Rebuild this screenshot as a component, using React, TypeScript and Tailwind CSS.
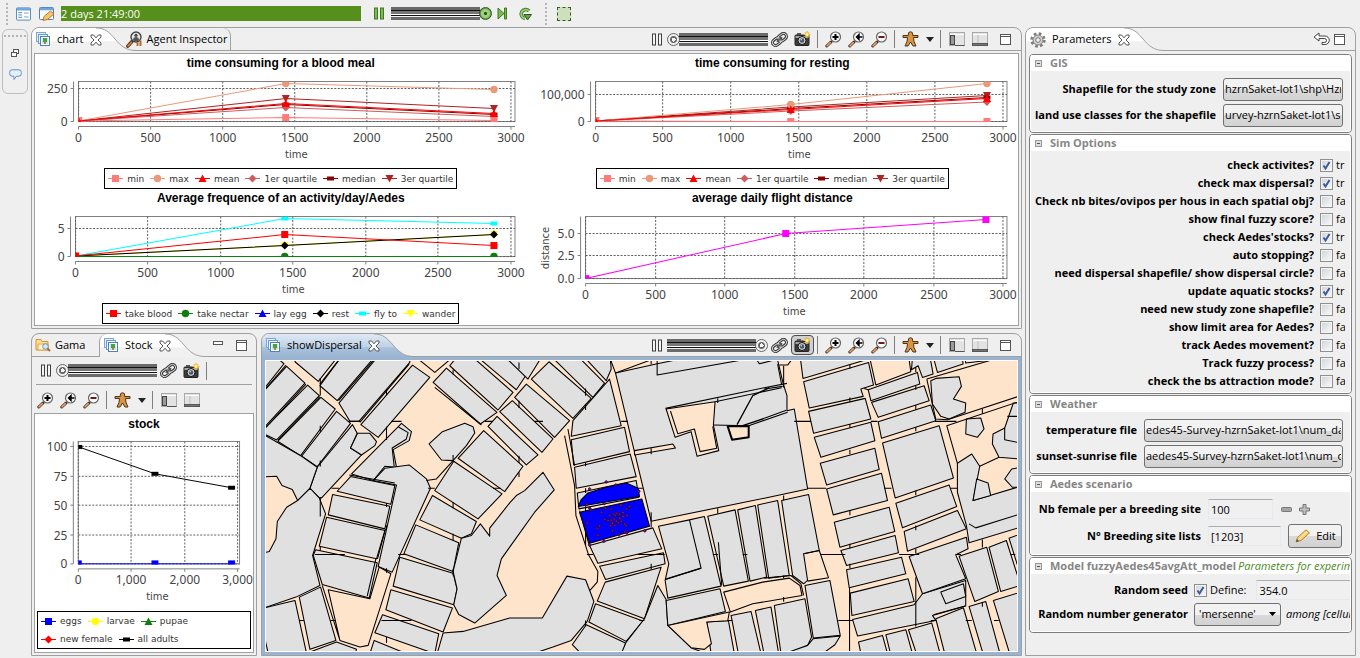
import React, { ReactNode } from "react";

type Shape = "square" | "circle" | "up" | "diamond" | "bar" | "down";

const UI = "font-['Open_Sans','Noto_Sans',sans-serif]";

/* ---------------------------------------------------------------- icons */

function StackIcon() {
  return (
    <svg width="15" height="15" viewBox="0 0 15 15" fill="none" className="shrink-0" aria-hidden="true">
      <rect x="0.500" y="0.500" width="9" height="9" fill="#e6f0fa" stroke="#7ba7d4" />
      <rect x="2.500" y="2.500" width="9" height="9" fill="#f0f6fc" stroke="#6c9bcb" />
      <rect x="4.500" y="4.500" width="9" height="9" fill="#fff" stroke="#4b83bd" />
      <rect x="6" y="6" width="6" height="6" fill="#cde3f5" />
      <rect x="7" y="6" width="4" height="4" fill="#4fa03c" />
      <rect x="8" y="10" width="2" height="2" fill="#c77c33" />
    </svg>
  );
}

function CloseIcon() {
  return (
    <svg width="12" height="12" viewBox="0 0 12 12" aria-hidden="true">
      <path d="M1 1h2.600L6 3.800 8.400 1H11v2L8 6l3 3v2H8.400L6 8.200 3.600 11H1V9l3-3-3-3z" fill="#fff" stroke="#555" />
    </svg>
  );
}

function MagnifyPersonIcon() {
  return (
    <svg width="17" height="17" viewBox="0 0 17 17" fill="none" aria-hidden="true">
      <path d="M1.800 15.200 6 10.500" stroke="#5a351a" strokeWidth="3.400" strokeLinecap="round" />
      <path d="M2 15 5.500 11.200" stroke="#d98a3a" strokeWidth="1.500" strokeLinecap="round" />
      <circle cx="10" cy="6" r="5" fill="#e4e4e4" stroke="#444" strokeWidth="1.400" />
      <circle cx="10" cy="4.300" r="1.600" fill="#444" />
      <path d="M7 9c0-2 1.500-3 3-3s3 1 3 3l-1.500 1.200h-3z" fill="#555" />
      <path d="M11.500 11v4M14.500 9.500V15" stroke="#b26b2c" strokeWidth="2" />
    </svg>
  );
}

function FolderIcon() {
  return (
    <svg width="16" height="14" viewBox="0 0 16 14" fill="none" aria-hidden="true">
      <path d="M1 12V1.500h5l1 2h6V12z" fill="#fbdf9b" stroke="#d8952f" />
      <path d="M3 12V6h10v6z" fill="#fff3cf" stroke="#e0a546" />
      <circle cx="10.500" cy="8.500" r="2.800" fill="#d5e6f7" stroke="#6e94bd" />
      <path d="m12.500 10.500 2.500 2.500" stroke="#b0672a" strokeWidth="2" />
    </svg>
  );
}

function GearIcon() {
  return (
    <svg width="16" height="16" viewBox="0 0 16 16" fill="none" className="shrink-0" aria-hidden="true">
      <circle cx="8" cy="8" r="6.300" stroke="#7c7c7c" strokeWidth="2.800" strokeDasharray="2.600 2.348" />
      <circle cx="8" cy="8" r="5" fill="#cfcfcf" stroke="#858585" />
      <circle cx="8" cy="8" r="2.300" fill="#f4f4f4" stroke="#777" />
    </svg>
  );
}

function PauseIcon({ green = false }: { green?: boolean }) {
  const f = green ? "#7cb950" : "#f4f4f4";
  const s = green ? "#3f7a22" : "#3f3f3f";
  return (
    <svg width="12" height="13" viewBox="0 0 12 13" aria-hidden="true">
      <rect x="1.500" y="1" width="3" height="11" fill={f} stroke={s} />
      <rect x="7.500" y="1" width="3" height="11" fill={f} stroke={s} />
    </svg>
  );
}

function LinkIcon() {
  return (
    <svg width="17" height="15" viewBox="0 0 17 15" fill="none" aria-hidden="true">
      <g transform="rotate(-38 8.500 7.500)">
        <rect x="0.500" y="4.500" width="9" height="6" rx="3" stroke="#333" strokeWidth="3" />
        <rect x="7.500" y="4.500" width="9" height="6" rx="3" stroke="#333" strokeWidth="3" />
        <rect x="0.500" y="4.500" width="9" height="6" rx="3" stroke="#d4d4d4" />
        <rect x="7.500" y="4.500" width="9" height="6" rx="3" stroke="#d4d4d4" />
        <path d="M5 7.500h7" stroke="#555" strokeWidth="1.500" />
      </g>
    </svg>
  );
}

function CameraIcon() {
  return (
    <svg width="17" height="16" viewBox="0 0 17 16" fill="none" aria-hidden="true">
      <rect x="1" y="4" width="14" height="10.500" rx="1" fill="#3c3c3c" stroke="#222" />
      <rect x="3" y="2" width="4" height="2" fill="#555" />
      <rect x="1.500" y="5" width="13" height="2" fill="#a5a5a5" />
      <circle cx="8" cy="9.500" r="4" fill="#d5d5d5" stroke="#111" />
      <circle cx="8" cy="9.500" r="2.300" fill="#46566a" />
      <circle cx="7.300" cy="8.800" r="0.800" fill="#cfe0f3" />
      <path d="M13 0v7M9.500 3.500h7M10.800 1.300l4.400 4.400M15.200 1.300l-4.400 4.400" stroke="#f0b429" strokeWidth="1.200" />
      <circle cx="13" cy="3.500" r="1.500" fill="#fff3a8" />
    </svg>
  );
}

function ZoomIcon({ kind }: { kind: "in" | "fit" | "out" }) {
  return (
    <svg width="17" height="17" viewBox="0 0 17 17" fill="none" aria-hidden="true">
      <path d="M1.800 15 6 11" stroke="#4a3020" strokeWidth="3" strokeLinecap="round" />
      <path d="M2 14.800 5.300 11.700" stroke="#e0a070" strokeWidth="1.600" strokeLinecap="round" />
      <circle cx="10.500" cy="6" r="5" fill="#fafafa" stroke="#666" strokeWidth="1.200" />
      {kind === "in" && <path d="M7.500 6h6M10.500 3v6" stroke="#000" strokeWidth="2" />}
      {kind === "out" && <path d="M7.500 6h6" stroke="#6e1a1a" strokeWidth="2" />}
      {kind === "fit" && <path d="M10 6h4.500M11 3.500 8.500 6 11 8.500z" fill="#000" stroke="#000" strokeWidth="1.400" />}
    </svg>
  );
}

function PersonIcon() {
  return (
    <svg width="17" height="16" viewBox="0 0 17 16" aria-hidden="true">
      <path d="M1 4.500h5.300V3a2.200 2.200 0 0 1 4.400 0v1.500H16v2h-4.500l.5 4 2 4.500h-3l-2.500-4L6 15H3l2-4.500.5-4H1z" fill="#dd9440" stroke="#4a3520" />
    </svg>
  );
}

function LayoutIcon({ side }: { side: "left" | "bottom" }) {
  return (
    <svg width="16" height="14" viewBox="0 0 16 14" aria-hidden="true">
      <rect x="0.500" y="0.500" width="15" height="13" fill="#e3e3e3" stroke="#a9a9a9" />
      <path d="M1 2.500h14" stroke="#fff" />
      {side === "left" ? (
        <>
          <rect x="1.500" y="3.500" width="4" height="9" fill="#9a9a9a" stroke="#444" />
          <path d="M6 13.500h9.500" stroke="#555" />
        </>
      ) : (
        <>
          <path d="M6 3v8" stroke="#bbb" />
          <rect x="0.500" y="11.500" width="15" height="2" fill="#777" stroke="#555" />
        </>
      )}
    </svg>
  );
}

function MaxIcon() {
  return (
    <svg width="11" height="11" viewBox="0 0 11 11" aria-hidden="true">
      <rect x="0.500" y="0.500" width="10" height="10" fill="#fff" stroke="#555" />
      <path d="M1 2.500h9" stroke="#555" />
    </svg>
  );
}

function MinIcon() {
  return (
    <svg width="11" height="11" viewBox="0 0 11 11" aria-hidden="true">
      <rect x="0.500" y="1.500" width="9" height="3" fill="#fff" stroke="#555" />
    </svg>
  );
}

/* ------------------------------------------------------------- controls */

function IconButton({ label, children, pressed, narrow }: { label: string; children: ReactNode; pressed?: boolean; narrow?: boolean }) {
  return (
    <button
      type="button"
      aria-label={label}
      className={
        "flex h-5 shrink-0 items-center justify-center " +
        (narrow ? "w-[15px]" : "w-[23px]") +
        (pressed ? " rounded-sm border border-[#4d4d4d] bg-[#d0d0d0]" : "")
      }
    >
      {children}
    </button>
  );
}

function Separator() {
  return <span className="mr-1 ml-[3px] h-[18px] w-px shrink-0 bg-[#808080]" />;
}

function SpeedSlider({ value, green }: { value: number; green?: boolean }) {
  return (
    <input
      type="range"
      aria-label="Speed"
      min={0}
      max={100}
      defaultValue={value}
      className={
        "h-[13px] w-[101px] shrink-0 appearance-none bg-[linear-gradient(#6b6b6b_0_3px,#111_3px_4px,#777_4px_7px,#fff_7px_8px,#111_8px_9px,#f2f2f2_9px_10px,#6b6b6b_10px_13px)] bg-[length:89px_13px] bg-no-repeat [&::-webkit-slider-thumb]:h-[13px] [&::-webkit-slider-thumb]:w-[13px] [&::-webkit-slider-thumb]:appearance-none [&::-webkit-slider-thumb]:rounded-full [&::-webkit-slider-thumb]:border " +
        (value > 50 ? "bg-left " : "bg-right ") +
        (green
          ? "[&::-webkit-slider-thumb]:border-[#31591f] [&::-webkit-slider-thumb]:bg-[radial-gradient(circle,#234a17_0_1px,#9fd07c_2px_4px,#6a9e58_5px)]"
          : "[&::-webkit-slider-thumb]:border-[#666] [&::-webkit-slider-thumb]:bg-[radial-gradient(circle,#f4f4f4_0_2px,#666_2px_3px,#f0f0f0_4px)]")
      }
    />
  );
}

function RunTools({ value, pressed }: { value: number; pressed?: boolean }) {
  return (
    <>
      <button type="button" aria-label="Pause" className="flex h-5 w-5 shrink-0 items-center justify-center">
        <PauseIcon />
      </button>
      <SpeedSlider value={value} />
      <IconButton label="Synchronize"><LinkIcon /></IconButton>
      <IconButton label="Snapshot" pressed={pressed}><CameraIcon /></IconButton>
      <Separator />
    </>
  );
}

function ViewTools() {
  return (
    <>
      <IconButton label="Zoom in"><ZoomIcon kind="in" /></IconButton>
      <IconButton label="Zoom to fit"><ZoomIcon kind="fit" /></IconButton>
      <IconButton label="Zoom out"><ZoomIcon kind="out" /></IconButton>
      <Separator />
      <IconButton label="Focus on agent"><PersonIcon /></IconButton>
      <IconButton label="Focus menu" narrow>
        <svg width="8" height="5" viewBox="0 0 8 5" aria-hidden="true"><path d="M0 0h8L4 5z" fill="#222" /></svg>
      </IconButton>
      <Separator />
      <IconButton label="Side panel"><LayoutIcon side="left" /></IconButton>
      <IconButton label="Overlay"><LayoutIcon side="bottom" /></IconButton>
    </>
  );
}

function TabCurve({ blue }: { blue?: boolean }) {
  const id = blue ? "curve-blue" : "curve-white";
  return (
    <svg width="40" height="23" viewBox="0 0 40 23" className="shrink-0" aria-hidden="true">
      <defs>
        <linearGradient id={id} x1="0" y1="0" x2="0" y2="1">
          <stop offset="0" stopColor={blue ? "#dfe9f4" : "#ffffff"} />
          <stop offset="0.55" stopColor={blue ? "#c0d2e6" : "#ffffff"} />
          <stop offset="0.6" stopColor={blue ? "#a9c1dc" : "#f1f1f1"} />
          <stop offset="1" stopColor={blue ? "#99b4d1" : "#f1f1f1"} />
        </linearGradient>
      </defs>
      <path d="M0 0C9 0 13 4 19 11S30 22.500 40 22.500V23H0z" fill={`url(#${id})`} />
      <path d="M0 0C9 0 13 4 19 11S30 22.500 40 22.500" fill="none" stroke="#a0a0a0" />
    </svg>
  );
}

function ActiveTab({ icon, label, blue, leftEdge }: { icon: ReactNode; label: string; blue?: boolean; leftEdge?: boolean }) {
  return (
    <div className="-mb-px flex h-[23px] shrink-0">
      <div
        className={
          "flex items-center gap-[6px] rounded-tl-lg pl-1 " +
          (leftEdge ? "border-l border-[#a0a0a0] " : "") +
          (blue
            ? "bg-[linear-gradient(#dfe9f4_0%,#c0d2e6_55%,#a9c1dc_60%,#99b4d1_100%)]"
            : "bg-[linear-gradient(#fff_0%,#fff_55%,#f1f1f1_60%,#f1f1f1_100%)]")
        }
      >
        {icon}
        <span>{label}</span>
        <button type="button" aria-label={"Close " + label} className="relative z-10"><CloseIcon /></button>
      </div>
      <div className="-ml-[6px]"><TabCurve blue={blue} /></div>
    </div>
  );
}

/* --------------------------------------------------------------- charts */

interface Series {
  name: string;
  color: string;
  shape: Shape;
  points: [number, number][];
}

interface ChartSpec {
  view: string;
  box: [number, number, number, number];
  xTicks: [number, string][];
  yTicks: [number, string][];
  yLabel?: { x: number; y: number; text: string };
  timeX: number;
  series: Series[];
}

function Marker({ x, y, shape, color }: { x: number; y: number; shape: Shape; color: string }) {
  switch (shape) {
    case "square":
      return <rect x={x - 3.5} y={y - 3.5} width="7" height="7" fill={color} />;
    case "circle":
      return <circle cx={x} cy={y} r="3.700" fill={color} />;
    case "up":
      return <path d={`M${x} ${y - 4}l4 7.500h-8z`} fill={color} />;
    case "down":
      return <path d={`M${x} ${y + 4}l-4-7.500h8z`} fill={color} />;
    case "diamond":
      return <path d={`M${x} ${y - 4}l4 4-4 4-4-4z`} fill={color} />;
    default:
      return <rect x={x - 3.5} y={y - 2} width="7" height="4" fill={color} />;
  }
}

function Plot({ spec }: { spec: ChartSpec }) {
  const [l, t, r, b] = spec.box;
  const clip = "clip" + spec.view.replace(/ /g, "-");
  return (
    <svg viewBox={spec.view} className="block h-auto w-full font-['Noto_Sans',sans-serif]">
      <clipPath id={clip}><rect x={l} y={t} width={r - l} height={b - t + 0.5} /></clipPath>
      <g fill="none" stroke="#808080">
        <rect x={l} y={t} width={r - l} height={b - t} />
        <path d={`M${l - 5} ${t}V${b}M${l} ${b + 5}H${r}`} />
        <path d={spec.xTicks.map(([x]) => `M${x} ${b + 5}v3`).join("") + spec.yTicks.map(([y]) => `M${l - 8} ${y}h3`).join("")} />
      </g>
      <path
        d={spec.xTicks.map(([x]) => `M${x} ${t}V${b}`).join("") + spec.yTicks.map(([y]) => `M${l} ${y}H${r}`).join("")}
        stroke="#606060"
        strokeDasharray="2 1.500"
        fill="none"
      />
      <g clipPath={`url(#${clip})`}>
        {spec.series.map((s) => (
          <g key={s.name}>
            <path d={"M" + s.points.map((p) => p.join(" ")).join("L")} fill="none" stroke={s.color} />
            {s.points.map(([x, y]) => <Marker key={x} x={x} y={y} shape={s.shape} color={s.color} />)}
          </g>
        ))}
      </g>
      <g fontSize="12" fill="#444">
        {spec.xTicks.map(([x, v]) => <text key={v} x={x} y={b + 20.5} textAnchor="middle">{v}</text>)}
        {spec.yTicks.map(([y, v]) => <text key={v} x={l - 11} y={y + 4.5} textAnchor="end">{v}</text>)}
      </g>
      <g fontSize="10" fill="#444" className="font-['DejaVu_Sans',sans-serif]">
        <text x={spec.timeX} y={b + 36.5} textAnchor="middle">time</text>
        {spec.yLabel && (
          <text x={spec.yLabel.x} y={spec.yLabel.y} textAnchor="middle" transform={`rotate(-90 ${spec.yLabel.x} ${spec.yLabel.y})`}>
            {spec.yLabel.text}
          </text>
        )}
      </g>
    </svg>
  );
}

function Legend({ series, wrap }: { series: Series[]; wrap?: boolean }) {
  return (
    <ul
      className={
        "flex items-center border border-black bg-white px-[3px] font-['DejaVu_Sans',sans-serif] text-[9px] leading-[18px] text-[#333] " +
        (wrap ? "mx-0.5 flex-wrap gap-x-[6px]" : "h-[21px] gap-x-[6px] self-center")
      }
    >
      {series.map((s) => (
        <li key={s.name} className="flex items-center gap-1 whitespace-nowrap">
          <svg width="15" height="9" viewBox="0 0 15 9" aria-hidden="true">
            <path d="M0 4.500h15" stroke={s.color} />
            <Marker x={7.5} y={4.5} shape={s.shape} color={s.color} />
          </svg>
          {s.name}
        </li>
      ))}
    </ul>
  );
}

function Chart({ title, spec, legend, wrap }: { title: string; spec: ChartSpec; legend?: Series[]; wrap?: boolean }) {
  return (
    <section className="flex min-w-0 flex-col">
      <h3 className="h-[18px] text-center font-['Liberation_Sans',Arial,sans-serif] text-xs leading-[18px] font-bold text-black">{title}</h3>
      <Plot spec={spec} />
      {legend && <Legend series={legend} wrap={wrap} />}
    </section>
  );
}

const quartiles = (o: [number, number], xs: [number, number], ys: Record<string, [number, number]>): Series[] => {
  const defs: [string, string, Shape][] = [
    ["min", "#ff7a7a", "square"],
    ["max", "#e99a7a", "circle"],
    ["mean", "#ff0000", "up"],
    ["1er quartile", "#cd5c5c", "diamond"],
    ["median", "#8b0000", "bar"],
    ["3er quartile", "#b22222", "down"],
  ];
  return defs.map(([name, color, shape]) => ({
    name,
    color,
    shape,
    points: [o, [xs[0], ys[name][0]], [xs[1], ys[name][1]]],
  }));
};

const paintOrder = (s: Series[], names: string[]) => names.map((n) => s.find((x) => x.name === n)!);
const QUARTILE_ORDER = ["3er quartile", "median", "1er quartile", "max", "min", "mean"];

const bloodMeal = quartiles([78.5, 121], [285.5, 493.5], {
  min: [117.5, 120.5], max: [83.5, 89.5], mean: [103.5, 113.5], "1er quartile": [107.5, 116.5], median: [104.5, 114.5], "3er quartile": [98.5, 108.5],
});
const resting = quartiles([594.5, 121], [789.5, 985.5], {
  min: [121.5, 121.5], max: [104.5, 83.5], mean: [109.5, 98.5], "1er quartile": [111, 102], median: [108.5, 97.5], "3er quartile": [107, 95.5],
});
const activity: Series[] = [
  { name: "take blood", color: "#ff0000", shape: "square", points: [[75.5, 256], [284.5, 234.5], [493.5, 245.5]] },
  { name: "take nectar", color: "#0f7d0f", shape: "circle", points: [[75.5, 256.5], [284.5, 256.5], [493.5, 256.5]] },
  { name: "lay egg", color: "#0000ff", shape: "up", points: [[75.5, 256.5], [284.5, 256.5], [493.5, 256.5]] },
  { name: "rest", color: "#000000", shape: "diamond", points: [[75.5, 256], [284.5, 245.5], [493.5, 234.5]] },
  { name: "fly to", color: "#00ffff", shape: "bar", points: [[75.5, 256], [284.5, 218.5], [493.5, 223.5]] },
  { name: "wander", color: "#ffff00", shape: "down", points: [[75.5, 256], [284.5, 245.5], [493.5, 234.5]] },
];
const flight: Series[] = [
  { name: "distance", color: "#ff00ff", shape: "square", points: [[584.5, 278.5], [784.5, 233.5], [984.5, 219.5]] },
];
const stock: Series[] = [
  { name: "eggs", color: "#0000ff", shape: "square", points: [[78.5, 564.5], [155.5, 564.5], [232.5, 564.5]] },
  { name: "larvae", color: "#ffff00", shape: "circle", points: [[78.5, 564.5], [155.5, 564.5]] },
  { name: "pupae", color: "#0f7d0f", shape: "up", points: [[78.5, 564.5], [155.5, 564.5]] },
  { name: "new female", color: "#ff0000", shape: "diamond", points: [[78.5, 564.5], [155.5, 564.5]] },
  { name: "all adults", color: "#000000", shape: "bar", points: [[79, 447], [155.5, 474], [232.5, 488]] },
];

const bloodSpec: ChartSpec = {
  view: "35 72 491 96",
  box: [78.5, 81.5, 514.5, 121.5],
  xTicks: [[78.5, "0"], [150.5, "500"], [222.5, "1000"], [294.5, "1500"], [366.5, "2000"], [438.5, "2500"], [510.5, "3000"]],
  yTicks: [[88.5, "250"], [121.5, "0"]],
  timeX: 296,
  series: paintOrder(bloodMeal, QUARTILE_ORDER),
};
const restingSpec: ChartSpec = {
  view: "526 72 491 96",
  box: [594.5, 81.5, 1005.5, 121.5],
  xTicks: [[594.5, "0"], [661.5, "500"], [729.5, "1000"], [797.5, "1500"], [865.5, "2000"], [933.5, "2500"], [1001.5, "3000"]],
  yTicks: [[94.5, "100,000"], [121.5, "0"]],
  timeX: 798,
  series: paintOrder(resting, QUARTILE_ORDER),
};
const activitySpec: ChartSpec = {
  view: "35 207 491 96",
  box: [75.5, 216.5, 514.5, 256.5],
  xTicks: [[75.5, "0"], [147.5, "500"], [220.5, "1000"], [292.5, "1500"], [365.5, "2000"], [437.5, "2500"], [510.5, "3000"]],
  yTicks: [[228.5, "5"], [256.5, "0"]],
  timeX: 293,
  series: paintOrder(activity, ["wander", "fly to", "rest", "take nectar", "take blood"]),
};
const flightSpec: ChartSpec = {
  view: "526 207 491 117",
  box: [584.5, 216.5, 1005.5, 278.5],
  xTicks: [[584.5, "0"], [654.5, "500"], [723.5, "1000"], [793.5, "1500"], [862.5, "2000"], [932.5, "2500"], [1001.5, "3000"]],
  yTicks: [[233.5, "5.0"], [255.5, "2.5"], [278.5, "0.0"]],
  yLabel: { x: 548, y: 248, text: "distance" },
  timeX: 793,
  series: flight,
};
const stockSpec: ChartSpec = {
  view: "35 433 219 179",
  box: [78.5, 441.5, 240.5, 564.5],
  xTicks: [[78.5, "0"], [131.5, "1,000"], [185.5, "2,000"], [238.5, "3,000"]],
  yTicks: [[446.5, "100"], [476.5, "75"], [505.5, "50"], [535.5, "25"], [564.5, "0"]],
  timeX: 158,
  series: paintOrder(stock, ["all adults", "eggs"]),
};

/* ------------------------------------------------------------------ map */

const WEST = [
  "10,80 58,92 72,104 10,182",
  "80,112 135,162 10,298 10,188",
  "143,168 178,200 50,333 10,314 10,302",
  "183,205 226,240 122,380 53,337",
  "230,247 272,283 178,405 172,413 125,382",
  "278,287 292,313 272,357 305,378 185,507 178,507 150,478 172,415",
  "293,313 330,313 350,338 345,350 305,378 272,357",
  "10,316 125,382 172,415 150,478 113,515 97,482 66,470 50,442 10,444",
  "150,478 178,507 197,555 158,680 180,770 108,805 10,838 10,672 28,668 48,630 52,578 80,535 113,515",
  "112,85 232,85 175,157 105,98",
  "243,85 343,85 232,215 180,170",
  "352,85 450,85 450,100 297,277 270,277 237,222",
  "458,108 510,145 355,325 303,287",
  "560,117 712,250 662,285 520,160",
  "590,85 640,85 760,190 715,243 570,110",
  "655,85 740,85 798,140 770,182",
  "765,85 845,85 805,150 745,92",
  "508,345 548,308 615,283 640,293 645,312 620,350 580,395 545,393",
  "275,435 425,283 455,308 448,335 400,362 410,415 375,412 340,455",
  "375,418 448,408 500,450 512,478 397,730 355,713 410,468 340,455",
  "272,443 405,470 393,526 232,487",
  "218,497 390,532 375,600 205,558",
  "200,565 375,605 350,690 178,652",
  "167,663 352,702 328,808 187,767 160,680",
  "118,805 182,775 228,935 150,962",
  "10,838 105,815 140,975 25,975 10,910",
  "150,970 230,940 290,962 285,975",
  "672,305 790,412 735,488 595,388",
  "582,397 727,495 655,570 525,485",
  "518,500 650,578 635,615 605,628 480,573",
  "468,588 597,642 580,728 432,675",
  "420,685 580,733 592,780 582,828 400,772",
  "393,783 578,838 550,910 378,843",
  "368,858 537,915 525,975 345,912",
  "343,935 440,975 330,975",
  "550,913 610,908 750,868 848,868 922,742 978,753 1003,818 983,878 935,935 880,955 820,975 532,975",
  "605,628 635,620 662,585 690,622 690,598 750,522 770,500 795,485 850,430 884,483 825,550 725,690 712,740 740,800 645,883 597,857 582,828 592,780 580,728",
];

const MID = [
  "118,98 245,208 190,268 65,150",
  "128,85 208,85 285,162 250,205",
  "225,85 302,85 305,120 290,155",
  "50,165 180,275 135,325 15,205",
  "8,215 130,330 97,370 -30,248",
  "-38,262 85,378 50,408 -65,292",
  "190,275 300,150 335,290 185,322",
  "185,332 345,295 360,368 192,408",
  "195,415 362,375 380,443 200,478",
  "203,492 380,455 388,505 208,540",
  "240,650 430,597 457,660 265,703",
  "270,712 462,672 467,705 288,752",
  "287,760 455,715 405,870 263,817",
  "258,825 400,877 350,938 238,880",
  "230,888 348,943 340,975 215,975 188,948",
  "445,770 470,812 475,890 545,957 590,975 335,975 350,940 405,870",
  "318,132 440,105 520,88 803,85 822,165 833,200 833,245 855,240 895,480 765,508 425,577",
  "447,592 540,573 585,563 635,772 475,808 467,755 478,705",
  "470,815 632,780 648,848 475,890",
  "592,880 657,875 675,975 605,975",
  "595,562 677,543 717,757 643,772",
  "685,543 738,530 772,745 722,757",
  "745,528 805,515 840,740 778,748",
  "665,860 725,848 755,975 687,975",
  "738,845 785,835 808,975 764,975",
];

const EAST = [
  "52,515 133,497 165,665 118,675 130,755 118,765 85,740",
  "122,770 197,755 228,920 147,928",
  "30,830 122,810 142,925 130,950 90,975 50,975",
  "147,930 228,922 212,948 175,975 60,975 130,950",
  "108,85 330,85 116,148",
  "118,158 313,100 328,168 290,180 297,202 135,237",
  "133,247 303,208 320,270 148,313",
  "150,325 320,280 332,335 170,385",
  "168,403 332,358 345,422 187,468",
  "187,480 352,433 370,515 207,558",
  "210,580 375,535 392,608 227,655",
  "230,665 393,620 403,672 247,710",
  "247,723 412,685 425,735 255,777",
  "258,793 432,750 450,818 263,860",
  "265,872 450,828 475,795 605,755 605,832 505,860 515,875 280,922",
  "283,940 355,920 370,975 290,975",
  "365,918 425,903 445,975 379,975",
  "433,903 503,883 528,975 457,975",
  "515,870 598,837 638,975 542,975",
  "615,833 665,818 708,975 657,975",
  "688,815 770,790 770,975 737,975",
  "312,182 460,130 467,165 320,215",
  "322,220 480,170 495,215 342,265",
  "342,278 500,228 515,275 352,328",
  "355,342 525,290 568,447 393,507",
  "395,523 555,468 578,533 415,597",
  "420,608 580,545 607,600 430,667",
  "435,683 607,625 612,660 575,678 605,750 475,795",
  "445,85 498,85 507,135 475,145 462,110 442,122",
  "508,85 595,85 597,105 520,130",
  "603,85 688,85 688,92 605,102",
  "500,155 515,148 585,143 592,172 568,210 605,222 603,250 555,270 530,262 505,225",
  "607,270 650,267 660,300 640,325 605,315",
  "748,222 770,222 770,390 705,385 685,345 687,315 722,297",
  "580,403 623,375 647,412 627,515 770,472 770,595 615,642 607,590 580,490",
  "638,450 672,462 680,500 627,515",
  "770,415 743,420 722,450 745,475 770,475",
  "585,682 668,655 703,788 632,818",
  "675,655 727,635 770,770 710,788",
  "735,628 770,615 770,740",
  "530,790 598,765 605,803 545,825",
];

const SPECKS = [
  [232, 526], [240, 538], [284, 524], [334, 529], [360, 533], [276, 550], [305, 541], [352, 540], [286, 572], [233, 582],
  [300, 560], [313, 556], [322, 553], [330, 556], [340, 551], [296, 575], [305, 574], [314, 570], [321, 577], [330, 568],
  [341, 563], [353, 560], [270, 591], [262, 598], [303, 590], [316, 589], [326, 582], [345, 586], [349, 590], [309, 606],
  [328, 618], [346, 609], [265, 619], [283, 637], [406, 606], [240, 480], [319, 468], [290, 459], [335, 577], [309, 583],
  [318, 560], [288, 538], [244, 543], [352, 612], [240, 648], [388, 487],
];

function Parcels({ list }: { list: string[] }) {
  return <>{list.map((p) => <polygon key={p} points={p} />)}</>;
}

function DispersalMap() {
  return (
    <svg viewBox="266 361 752 292" preserveAspectRatio="xMidYMid slice" className="block h-full w-full bg-[#ffe4cc]" role="img" aria-label="Dispersal map">
      <g fill="#e0e0e0" stroke="#000" strokeWidth="3.200" strokeLinejoin="round">
        <g transform="translate(260 330) scale(0.33333)">
          <Parcels list={WEST} />
          <g fill="none">
            <path d="M478 92 525 130 570 92M525 175 665 288M580 395 530 450 500 455" />
            <path d="M205 783 330 810 358 715 393 735 325 950 300 955 240 935zM187 770 240 935M268 438 405 462M180 203 55 333M78 108 18 178M138 165 18 295" />
            <path d="M448 105 300 280M342 92 236 215M237 92 180 165M348 690l-26 112M377 600l-24 90M415 293l30 18-6 20-42 26 6 55" />
            <path d="M181 147v52M380 180v18M181 290v18M380 293v40M265 277h38M395 277h30M675 277h35M580 122v14M181 395v18M580 378v18M215 478h22M505 478h20M700 478h22M181 505v58M380 522v12M380 590v12M580 520v18M181 652v14M165 677h90M415 677h22M380 718v14M580 615v20M580 720v20M118 875h14M212 875h16M365 875h90M380 925v18" />
          </g>
        </g>
        <g transform="translate(510 330) scale(0.33333)">
          <Parcels list={MID} />
          <g fill="#ffe4cc">
            <polygon points="470,240 617,218 612,288 628,365 563,382 545,308 497,325" />
            <polygon points="375,365 490,345 498,357 375,378" />
            <polygon points="643,790 760,760 840,748 872,770 878,800 730,825 663,850" />
            <polygon points="475,890 660,850 655,876 592,880 606,945 585,962 545,957" />
            <polygon points="655,292 718,292 718,325 668,332" strokeWidth="6" />
          </g>
          <g fill="none">
            <path d="M443 92v46L780 78M742 92l8 12 40-10M468 238 765 176 833 163M617 218l200-42M483 246l22 68 50-14 17 68 50-10-12-66M612 288l106 2 117-40M540 573l35 145-108 34" />
            <path d="M575 718 467 752M683 287l47-87 50-24M700 290l65-22" strokeWidth="4" />
            <path d="M303 92 318 132 425 92M165 320l30 150 4 90 38 118 28 50-2 32-22 25M175 300l20 110M210 545l30 108M425 550v45M627 640l10 130" />
            <path d="M28 100v20M28 215v22M228 178v22M28 380v22M28 430v14M228 225v18M75 277h25M335 277h20M425 92v14M625 208v14M425 358v18M228 400v12M228 478v14M228 532v14M385 478h15M228 610v40M625 538v16M232 677h18M385 677h80M610 677h16M700 677h14M425 705v18M228 875v18M390 875h15M655 875h14" />
          </g>
          <g fill="#0000ff">
            <polygon points="206,533 215,512 235,492 290,475 350,462 386,478 390,503" />
            <polygon points="210,550 397,510 420,592 240,643" />
          </g>
          <g fill="#7a1878" stroke="#24003a" strokeWidth="2">
            {SPECKS.map(([x, y]) => <circle key={x + "-" + y} cx={x} cy={y} r="3.800" />)}
          </g>
        </g>
        <g transform="translate(765 330) scale(0.33333)">
          <Parcels list={EAST} />
          <g fill="none">
            <path d="M318 92 335 168 440 128 435 92M488 150 760 70M488 150 515 270 550 272 770 200M770 216 548 290 580 403M0 180l55-8M40 105l12 62M0 268l66-24M45 108h25l12-16" />
            <path d="M647 412 705 385M615 585 635 597 770 555M722 297v35l38 8M730 262h30M118 675l47-10 28 82-63 10M0 748l80-8 30 25 8 35M508 858l95-26M312 182l-12-4M455 745v70" />
            <path d="M58 110v65M90 277h50M130 478h55M168 677h75M222 875h43M256 777v190M257 105v14M257 205v14M257 285v12M257 362v14M257 545v14M257 645v14M257 705v14M455 115v14M455 170v12M455 228v14M455 295v12M455 485v14M455 590v14M455 660v14M455 815v78M512 277h65M320 277h20M360 478h22M560 478h20M405 677h60M575 677h16M655 240v14M655 632v24M655 820v14M605 875h18M690 875h14M740 677h14M500 875h14M58 500v14M58 740v8M58 805v14" />
          </g>
        </g>
      </g>
    </svg>
  );
}

/* ----------------------------------------------------------- parameters */

function Group({ title, extra, children }: { title: string; extra?: string; children: ReactNode }) {
  return (
    <section className="overflow-hidden rounded-[4px] border border-[#7d7d7d] outline -outline-offset-2 outline-white">
      <h3 className="mx-px flex h-4 items-center gap-2 overflow-hidden bg-white pl-1 leading-4 whitespace-nowrap text-[#868686]">
        <button type="button" aria-label={"Collapse " + title} className="h-[7px] w-[7px] shrink-0 border border-[#999] bg-[#ddd]">
          <span className="mx-px block h-px bg-[#555]" />
        </button>
        <span className="font-bold">
          {title} {extra && <em className="-ml-px font-normal text-[#4c8a1c]">{extra}</em>}
        </span>
      </h3>
      {children}
    </section>
  );
}

function FileRow({ label, value, wide }: { label: string; value: string; wide?: boolean }) {
  const id = "file-" + label.replace(/\W+/g, "-");
  return (
    <div className="flex h-[26px] items-center justify-end gap-[7px] pr-2">
      <label htmlFor={id} className="font-bold whitespace-nowrap">{label}</label>
      <button
        id={id}
        type="button"
        className={
          "flex h-[23px] shrink-0 items-center overflow-hidden rounded-[3px] border border-[#707070] bg-[linear-gradient(#f2f2f2_50%,#dadada_50%,#d2d2d2)] px-px whitespace-nowrap " +
          (wide ? "w-[199px]" : "w-[120px]")
        }
      >
        <span className="block w-full overflow-hidden text-left">{value}</span>
      </button>
    </div>
  );
}

function Tick({ id, checked }: { id: string; checked?: boolean }) {
  return (
    <span className="relative block h-[13px] w-[13px] shrink-0">
      <input
        id={id}
        type="checkbox"
        defaultChecked={checked}
        className="peer block h-[13px] w-[13px] appearance-none border border-[#8e8f8f] bg-[linear-gradient(135deg,#cfd3d8,#fafafa)] shadow-[inset_0_0_0_1px_#f4f4f4]"
      />
      <svg viewBox="0 0 13 13" className="pointer-events-none absolute inset-0 hidden peer-checked:block" aria-hidden="true">
        <path d="M3.500 6.500 5.500 9.500 9.500 3" fill="none" stroke="#3c5a9c" strokeWidth="2" />
      </svg>
    </span>
  );
}

const OPTIONS: [string, boolean][] = [
  ["check activites?", true],
  ["check max dispersal?", true],
  ["Check nb bites/ovipos per hous in each spatial obj?", false],
  ["show final fuzzy score?", false],
  ["check Aedes'stocks?", true],
  ["auto stopping?", false],
  ["need dispersal shapefile/ show dispersal circle?", false],
  ["update aquatic stocks?", true],
  ["need new study zone shapefile?", false],
  ["show limit area for Aedes?", false],
  ["track Aedes movement?", false],
  ["Track fuzzy process?", false],
  ["check the bs attraction mode?", false],
];

const FIELD = "h-5 border border-[#e3e9ef] border-t-[#abadb3] bg-[#f0f0f0] px-[2px]";

function Parameters() {
  return (
    <aside className="flex w-[331px] shrink-0 flex-col rounded-t-lg border border-[#a0a0a0]">
      <header className="flex h-[23px] shrink-0 items-center border-b border-[#a0a0a0]">
        <ActiveTab icon={<GearIcon />} label="Parameters" />
        <div className="ml-auto flex items-center gap-1 pr-2.5">
          <button type="button" aria-label="Revert">
            <svg width="17" height="14" viewBox="0 0 17 14" aria-hidden="true">
              <path d="M6 1 1 5l5 4V6.500h5.500a2 2 0 0 1 0 4H9v2h3a4 4 0 0 0 0-8.500H6z" fill="#fff" stroke="#444" />
            </svg>
          </button>
          <button type="button" aria-label="Maximize"><MaxIcon /></button>
        </div>
      </header>
      <div className="flex flex-col gap-px px-[3px] pt-[3px]">
        <Group title="GIS">
          <div className="pt-[5px] pb-1">
            <FileRow label="Shapefile for the study zone" value="hzrnSaket-lot1\shp\Hzrn" />
            <FileRow label="land use classes for the shapefile" value="urvey-hzrnSaket-lot1\shp" />
          </div>
        </Group>
        <Group title="Sim Options">
          <div className="pt-[5px] pb-[3px]">
            {OPTIONS.map(([text, on], i) => (
              <div key={text} className="flex h-[18px] items-center justify-end pr-[6px]">
                <label htmlFor={"opt" + i} className="mr-[6px] font-bold whitespace-nowrap">{text}</label>
                <Tick id={"opt" + i} checked={on} />
                <span className="ml-[3px] w-[9px] overflow-hidden">{on ? "true" : "false"}</span>
              </div>
            ))}
          </div>
        </Group>
        <Group title="Weather">
          <div className="pt-[5px] pb-1">
            <FileRow wide label="temperature file" value="edes45-Survey-hzrnSaket-lot1\num_data" />
            <FileRow wide label="sunset-sunrise file" value="aedes45-Survey-hzrnSaket-lot1\num_data" />
          </div>
        </Group>
        <Group title="Aedes scenario">
          <div className="grid grid-cols-[171px_1fr] items-center gap-x-[7px] gap-y-px pt-1 pb-[6px]">
            <label htmlFor="females" className="text-right font-bold whitespace-nowrap">Nb female per a breeding site</label>
            <div className="flex h-[26px] items-center">
              <input id="females" defaultValue="100" className={FIELD + " mr-2 w-[65px]"} />
              <button type="button" aria-label="Decrease" className="mr-[7px]">
                <svg width="11" height="11" viewBox="0 0 11 11" aria-hidden="true"><rect x="0.500" y="3.500" width="10" height="4" rx="1" fill="#a5a5a5" stroke="#777" /></svg>
              </button>
              <button type="button" aria-label="Increase">
                <svg width="11" height="11" viewBox="0 0 11 11" aria-hidden="true"><path d="M4 .5h3V4h3.500v3H7v3.500H4V7H.5V4H4z" fill="#bdbdbd" stroke="#777" /></svg>
              </button>
            </div>
            <label htmlFor="sites" className="text-right font-bold whitespace-nowrap">N° Breeding site lists</label>
            <div className="flex h-[26px] items-center gap-[7px]">
              <input id="sites" defaultValue="[1203]" className={FIELD + " w-[73px]"} />
              <button type="button" className="flex h-6 w-[54px] items-center justify-center gap-1 rounded-[3px] border border-[#707070] bg-[linear-gradient(#f2f2f2_50%,#dadada_50%,#d2d2d2)]">
                <PencilIcon />
                Edit
              </button>
            </div>
          </div>
        </Group>
        <Group title="Model fuzzyAedes45avgAtt_model" extra="Parameters for experiment">
          <div className="grid grid-cols-[158px_1fr] items-center gap-x-[6px] pt-1 pb-[6px]">
            <label htmlFor="seed" className="text-right font-bold whitespace-nowrap">Random seed</label>
            <div className="flex h-6 items-center pr-[6px]">
              <Tick id="define" checked />
              <label htmlFor="define" className="mr-2.5 ml-[3px]">Define:</label>
              <input id="seed" defaultValue="354.0" className={FIELD + " min-w-0 flex-1"} />
            </div>
            <label htmlFor="generator" className="text-right font-bold whitespace-nowrap">Random number generator</label>
            <div className="flex h-6 items-center gap-[5px] pr-2">
              <span className="relative flex shrink-0 items-center">
                <select id="generator" className="h-[23px] w-[87px] appearance-none rounded-[3px] border border-[#707070] bg-[linear-gradient(#f2f2f2_50%,#dadada_50%,#d2d2d2)] pl-1">
                  <option>'mersenne'</option>
                </select>
                <svg width="7" height="4" viewBox="0 0 7 4" className="pointer-events-none absolute right-[5px]" aria-hidden="true"><path d="M0 0h7L3.500 4z" /></svg>
              </span>
              <em className="overflow-hidden whitespace-nowrap">among [cellular]</em>
            </div>
          </div>
        </Group>
      </div>
    </aside>
  );
}

function PencilIcon() {
  return (
    <svg width="18" height="16" viewBox="0 0 18 16" aria-hidden="true">
      <path d="m2 14 1.500-4.500L12 1.800 15.500 5 7 12.500z" fill="#f8d376" stroke="#b9822b" />
      <path d="m5 11 8-7.200" stroke="#fdf0c0" />
      <path d="m2 14 1-3 2 2z" fill="#554" />
    </svg>
  );
}

/* ------------------------------------------------------------------ app */

function Grip({ row }: { row?: boolean }) {
  return (
    <span
      className={
        row
          ? "h-[2px] w-[22px] bg-[repeating-linear-gradient(90deg,#b5b5b5_0_2px,transparent_2px_4px)]"
          : "block h-[22px] w-[2px] shrink-0 bg-[repeating-linear-gradient(#b5b5b5_0_2px,transparent_2px_4px)]"
      }
    />
  );
}

function TopBar() {
  return (
    <div className="flex h-[27px] shrink-0 items-center pl-[6px]">
      <Grip />
      <button type="button" aria-label="Perspective" className="ml-2">
        <svg width="15" height="14" viewBox="0 0 16 14" aria-hidden="true">
          <rect x="0.500" y="0.500" width="15" height="13" rx="1" fill="#fff" stroke="#4b83bd" />
          <path d="M1 2h14" stroke="#6fa3dc" strokeWidth="2.500" />
          <path d="M2.500 5.500h4M2.500 8h4M2.500 10.500h4" stroke="#4b83bd" />
          <path d="M8.500 6h5M8.500 10h5" stroke="#b8ccdf" strokeWidth="2" />
        </svg>
      </button>
      <button type="button" aria-label="Edit model" className="ml-2">
        <svg width="16" height="16" viewBox="0 0 16 16" aria-hidden="true">
          <rect x="0.500" y="1.500" width="14" height="12" rx="1" fill="#fff" stroke="#4b83bd" />
          <path d="M1 3h13" stroke="#6fa3dc" strokeWidth="2.500" />
          <path d="m4 14.500 1-4 6.500-5.500 3.500 3-6.500 5.500z" fill="#f5c56a" stroke="#c07a2c" />
        </svg>
      </button>
      <output className="ml-[6px] block h-[15px] w-[300px] bg-[#568f1b] leading-[15px] text-white">2 days 21:49:00</output>
      <button type="button" aria-label="Pause simulation" className="mr-[6px] ml-3"><PauseIcon green /></button>
      <SpeedSlider value={100} green />
      <button type="button" aria-label="Step" className="ml-[5px]">
        <svg width="11" height="13" viewBox="0 0 11 13" aria-hidden="true"><path d="M1 1v11l6-5.500zM7.500 1h2v11h-2z" fill="#7cb950" stroke="#3f7a22" /></svg>
      </button>
      <button type="button" aria-label="Reload" className="ml-[10px]">
        <svg width="14" height="14" viewBox="0 0 14 14" fill="none" aria-hidden="true">
          <path d="M11 4A4.500 4.500 0 1 0 7 11.500" stroke="#4d7d38" strokeWidth="3.600" />
          <path d="M11 4A4.500 4.500 0 1 0 7 11.500" stroke="#97cf74" strokeWidth="1.800" />
          <path d="M6 7.500h7.500L9.500 13z" fill="#66a344" stroke="#2f5a1e" />
        </svg>
      </button>
      <span className="ml-[13px]"><Grip /></span>
      <button type="button" aria-label="Selection" className="ml-[10px] h-[14px] w-[14px] border border-dashed border-[#36611c] bg-[#cddfbd]" />
    </div>
  );
}

export default function App() {
  return (
    <div className={"flex h-screen flex-col overflow-hidden bg-[#efefef] text-[11px] text-black " + UI}>
      <TopBar />
      <div className="flex min-h-0 flex-1 gap-[3px] pr-1 pb-[2px]">
        <nav className="mt-[2px] ml-[2px] flex w-[26px] shrink-0 flex-col items-center gap-3 self-start rounded-md border border-[#bdbdbd] pt-[5px] pb-3">
          <Grip row />
          <button type="button" aria-label="Restore">
            <svg width="9" height="8" viewBox="0 0 9 8" aria-hidden="true">
              <rect x="2.500" y="0.500" width="5" height="4" fill="#fff" stroke="#555" />
              <rect x="0.500" y="3.500" width="5" height="4" fill="#fff" stroke="#555" />
            </svg>
          </button>
          <button type="button" aria-label="Console">
            <svg width="13" height="12" viewBox="0 0 13 12" aria-hidden="true">
              <path d="M3 .8h7a2.400 2.400 0 0 1 2.300 2.700v1A2.400 2.400 0 0 1 10 7.200H7.500L5 10.500V7.200H3A2.400 2.400 0 0 1 .7 4.500v-1A2.400 2.400 0 0 1 3 .8z" fill="#e8f1fb" stroke="#5f8fc8" />
            </svg>
          </button>
        </nav>

        <main className="flex min-w-0 flex-1 flex-col gap-1">
          <section className="shrink-0 rounded-t-lg border border-[#a0a0a0]">
            <header className="flex h-[23px] items-center border-b border-[#a0a0a0]">
              <ActiveTab icon={<StackIcon />} label="chart" />
              <button type="button" className="-ml-2.5 flex h-[23px] shrink-0 items-center gap-1 rounded-tr-lg border-r border-[#a0a0a0] pr-[3px]">
                <MagnifyPersonIcon />
                Agent Inspector
              </button>
              <div className="ml-auto flex items-center pr-1">
                <RunTools value={0} />
                <ViewTools />
                <span className="w-[3px]" />
                <IconButton label="Maximize"><MaxIcon /></IconButton>
              </div>
            </header>
            <div className="m-0.5 grid grid-cols-2 border border-[#a0a0a0] bg-white pb-px">
              <Chart title="time consuming for a blood meal" spec={bloodSpec} legend={bloodMeal} />
              <Chart title="time consuming for resting" spec={restingSpec} legend={resting} />
              <Chart title="Average frequence of an activity/day/Aedes" spec={activitySpec} legend={activity} />
              <Chart title="average daily flight distance" spec={flightSpec} />
            </div>
          </section>

          <div className="flex min-h-0 flex-1 gap-1">
            <section className="flex w-[226px] shrink-0 flex-col rounded-t-lg border border-[#a0a0a0]">
              <header className="flex h-[23px] shrink-0 items-center border-b border-[#a0a0a0]">
                <button type="button" className="flex h-[23px] w-[67px] shrink-0 items-center gap-1 pl-[3px]">
                  <FolderIcon />
                  Gama
                </button>
                <ActiveTab icon={<StackIcon />} label="Stock" leftEdge />
                <div className="ml-auto flex items-center gap-3 pr-[9px]">
                  <button type="button" aria-label="Minimize"><MinIcon /></button>
                  <button type="button" aria-label="Maximize"><MaxIcon /></button>
                </div>
              </header>
              <div className="mx-1 flex h-[28px] shrink-0 items-center border-b border-[#a0a0a0]"><RunTools value={0} /></div>
              <div className="flex h-[28px] shrink-0 items-center pt-0.5 pl-0.5"><ViewTools /></div>
              <div className="mx-0.5 mb-0.5 flex-1 border border-[#a0a0a0] bg-white pt-px">
                <Chart title="stock" spec={stockSpec} legend={stock} wrap />
              </div>
            </section>

            <section className="flex min-w-0 flex-1 flex-col rounded-t-lg border border-[#a0a0a0]">
              <header className="flex h-[23px] shrink-0 items-center border-b border-[#a0a0a0]">
                <ActiveTab icon={<StackIcon />} label="showDispersal" blue />
                <div className="ml-auto flex items-center pr-1">
                  <RunTools value={100} pressed />
                  <ViewTools />
                  <span className="w-[3px]" />
                  <IconButton label="Maximize"><MaxIcon /></IconButton>
                </div>
              </header>
              <div className="min-h-0 flex-1 bg-[#99b4d1] p-[3px]">
                <div className="h-full border border-white"><DispersalMap /></div>
              </div>
            </section>
          </div>
        </main>

        <Parameters />
      </div>
    </div>
  );
}
